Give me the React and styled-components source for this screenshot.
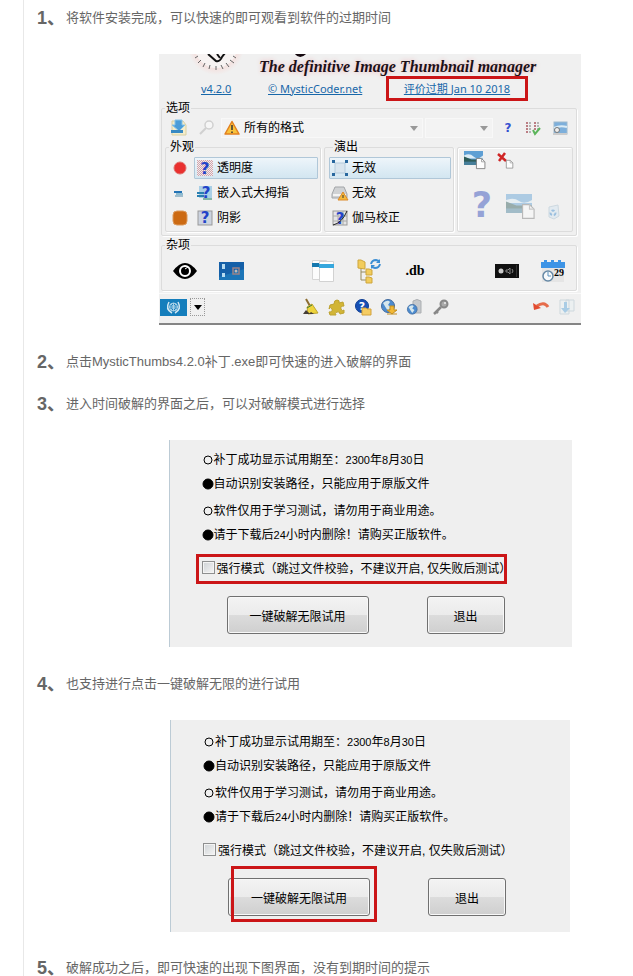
import React from "react";
import styled, { createGlobalStyle, css } from "styled-components";

const GlobalStyle = createGlobalStyle`
  * { box-sizing: border-box; }
  body {
    margin: 0;
    background: #fff;
    color: #666;
    font-family: "Liberation Sans", "Noto Sans CJK SC", sans-serif;
  }
  button, select, input { font: inherit; color: inherit; margin: 0; }
  svg { display: block; overflow: visible; }
`;

/* ---------- article ---------- */

const Article = styled.main`
  margin-left: 23px;
  padding: 10px 0 0 13px;
  border-left: 1px solid #e8e8e8;
`;

const Step = styled.p`
  display: flex;
  align-items: center;
  height: 16px;
  margin: 0 0 ${(p) => (p.$tight ? 26 : p.$last ? 0 : 28)}px;
  font-size: 13px;
  line-height: 16px;
  white-space: nowrap;
`;

const StepNumber = styled.strong`
  width: 29px;
  flex: none;
  font-size: 18px;
`;

const Figure = styled.figure`
  display: flex;
  justify-content: center;
  margin: 0 0 ${(p) => p.$gap || 29}px 70px;
`;

/* ---------- application window ---------- */

const AppWindow = styled.div`
  width: 100%;
  max-width: 422px;
  overflow: hidden;
  border-bottom: 2px solid #858585;
  background: #f0f0f0;
  color: #000;
  font-size: 12px;
  line-height: 14px;
`;

const Brand = styled.div`
  display: grid;
  grid-template-columns: 100px 1fr;
  height: 22px;
`;

const Tagline = styled.em`
  display: flex;
  align-items: center;
  padding-top: 3px;
  color: #1c1018;
  font: italic bold 16px "Liberation Serif", serif;
  white-space: nowrap;
  text-shadow: 0 0 5px #eeb4b8;
`;

const Links = styled.nav`
  display: grid;
  grid-template-columns: 32px 92px 142px;
  column-gap: 35px;
  align-items: center;
  justify-content: start;
  padding-left: 42px;
  height: 25px;
`;

const TextLink = styled.a`
  color: #1767a9;
  font-family: "Noto Sans", "Noto Sans CJK SC", sans-serif;
  font-size: 11px;
  line-height: 14px;
  white-space: nowrap;
  text-decoration: underline;
`;

const MarkedLink = styled(TextLink)`
  display: flex;
  align-items: center;
  justify-content: center;
  width: 142px;
  height: 25px;
  margin-left: -9px;
  border: 3px solid #cb1517;
`;

const Group = styled.fieldset`
  min-width: 0;
  margin: 0 4px 2px 2px;
  padding: ${(p) => p.$pad || "0"};
  border: 1px solid #dcdcdc;
  border-radius: 2px;
  box-shadow: 1px 1px 0 #fff;
`;

const SubGroup = styled(Group)`
  margin: 0;
`;

const IconGroup = styled.div`
  display: flex;
  flex-direction: column;
  gap: 21px;
  margin-top: 7px;
  padding-top: 3px;
  border: 1px solid #dcdcdc;
  border-radius: 2px;
  box-shadow: inset 1px 1px 0 #fff;
`;

const IconLine = styled.div`
  display: flex;
  align-items: flex-end;
  gap: ${(p) => (p.$large ? 13 : 11)}px;
  padding-left: ${(p) => (p.$large ? 13 : 6)}px;
`;

const Legend = styled.legend`
  height: 14px;
  margin-left: ${(p) => p.$indent ?? 3}px;
  padding: 0 1px;
`;

const FormatRow = styled.div`
  display: grid;
  grid-template-columns: 28px 28px 202px 70px repeat(3, 1fr);
  align-items: center;
  padding-top: 3px;
  margin-bottom: 2px;
`;

const ComboBox = styled.label`
  display: flex;
  align-items: center;
  gap: 4px;
  height: 20px;
  margin-left: ${(p) => (p.$spaced ? 2 : 0)}px;
  padding: 0 4px 0 2px;
  background: #f3f3f3;
  border: 1px solid #f8f8f8;
`;

const Select = styled.select`
  flex: 1;
  min-width: 0;
  appearance: none;
  border: 0;
  padding: 0;
  background: none;
`;

const Columns = styled.div`
  display: grid;
  grid-template-columns: 156px 130px 1fr;
  gap: 3px;
`;

const Settings = styled.div`
  display: grid;
  grid-template-columns: ${(p) => (p.$toggles ? "28px 1fr" : "1fr")};
  row-gap: 3px;
  padding: 3px 2px 2px ${(p) => (p.$toggles ? 0 : 4)}px;
`;

const IconButton = styled.button`
  display: flex;
  align-items: center;
  justify-content: center;
  min-width: 0;
  padding: 0;
  border: 0;
  background: none;
  opacity: ${(p) => (p.$dim ? 0.45 : 1)};
`;

const Setting = styled.button`
  display: flex;
  align-items: center;
  gap: 4px;
  height: 22px;
  padding: 0 2px;
  border: 1px solid transparent;
  background: none;
  white-space: nowrap;
  ${(p) =>
    p.$active &&
    css`
      border-color: #b0c7d8;
      border-radius: 1px;
      background: linear-gradient(#eef5fa, #ddecf5 60%, #d3e6f1);
    `}
`;

const MiscRow = styled.div`
  display: grid;
  grid-template-columns: repeat(9, 1fr);
  height: 38px;
`;

const DbLabel = styled.span`
  font: bold 14px "Liberation Serif", serif;
`;

const StatusBar = styled.div`
  display: flex;
  align-items: center;
  height: 30px;
  padding: 0 1px 3px;
  border-top: 1px solid #fafafa;
`;

const Language = styled.button`
  display: flex;
  align-items: center;
  gap: 3px;
  width: 46px;
  margin-right: 92px;
  padding: 0;
  border: 0;
  background: none;
`;

const ArrowBox = styled.span`
  display: grid;
  place-items: center;
  width: 15px;
  height: 18px;
  border: 1px dotted #999;
`;

const ToolSet = styled.div`
  display: grid;
  grid-auto-flow: column;
  grid-auto-columns: 26px;
  margin-left: ${(p) => (p.$end ? "auto" : 0)};
`;

/* ---------- patch dialog ---------- */

const Dialog = styled.form`
  width: 100%;
  max-width: ${(p) => (p.$late ? 400 : 403)}px;
  padding: ${(p) => (p.$late ? "10px 0 16px" : "8px 0 13px")};
  border-left: 1px solid #bccbd5;
  background: #efefef;
  color: #000;
  font-size: 12px;
`;

const Notes = styled.ul`
  margin: 0;
  padding: 0 0 3px 32px;
  list-style: none;
  line-height: 24px;
  white-space: nowrap;
`;

const Note = styled.li`
  display: flex;
  align-items: center;
  height: 24px;
`;

const Digits = styled.span`
  font-size: 11px;
`;

const CheckFrame = styled.label`
  display: flex;
  align-items: center;
  gap: 2px;
  width: ${(p) => (p.$marked ? "311px" : "auto")};
  height: 30px;
  margin: 4px 0 12px 26px;
  padding: 0 0 4px 3px;
  border: 3px solid ${(p) => (p.$marked ? "#cb1517" : "transparent")};
  white-space: nowrap;
`;

const Checkbox = styled.input`
  flex: none;
  appearance: none;
  width: 13px;
  height: 13px;
  border: 1px solid #8e8f8f;
  background: linear-gradient(135deg, #cfd3d6, #f5f5f5);
  box-shadow: inset 0 0 0 1px #f4f4f4;
`;

const Actions = styled.div`
  display: flex;
  gap: 58px;
  padding-left: 57px;
`;

const PushButton = styled.button`
  width: ${(p) => (p.$wide ? 142 : 78)}px;
  height: 38px;
  padding: 0;
  border: 1px solid #707070;
  border-radius: 3px;
  background: linear-gradient(#f3f3f3, #ebebeb 50%, #dcdcdc 50%, #cfcfcf);
  box-shadow: inset 0 0 0 1px #f8f8f8;
`;

const ButtonHolder = styled.div`
  position: relative;
`;

const Marker = styled.span`
  position: absolute;
  inset: -12px -7px -6px 3px;
  border: 3px solid #cb1517;
  pointer-events: none;
`;

/* ---------- drawings ---------- */

const Svg = ({ w = 16, h = 16, children }) => (
  <svg width={w} height={h} viewBox={`0 0 ${w} ${h}`} fill="none" aria-hidden="true">
    {children}
  </svg>
);

const Mark = ({ x, y, size, color = "#2343c8" }) => (
  <text x={x} y={y} fontSize={size} fontWeight="bold" fontFamily="DejaVu Sans, sans-serif" fill={color} textAnchor="middle">?</text>
);

const Bullet = ({ filled }) => (
  <Svg w={12} h={12}>
    <circle cx="6" cy="6" r={filled ? 5 : 4} fill={filled ? "#000" : "none"} stroke="#000" />
  </Svg>
);

const Page = ({ x, y, s = 1 }) => (
  <g transform={`translate(${x} ${y}) scale(${s})`}>
    <path d="M.5.5h6l4 4v8H.5z" fill="#fdfdfd" stroke="#777" />
    <path d="M6.500 .5v4h4" stroke="#999" />
  </g>
);

const Landscape = ({ w, h }) => (
  <g>
    <rect width={w} height={h} fill="#5e9fd4" />
    <path d={`M0 ${h * 0.32}q${w * 0.3}-3 ${w * 0.5} 1t${w * 0.5}-1v3H0z`} fill="#dcecf6" />
    <path d={`M0 ${h * 0.4}l${w * 0.4} ${h * 0.2}H${w}v${h * 0.2}H0z`} fill="#2e5c58" />
    <rect y={h * 0.76} width={w} height={h * 0.24} fill="#467e99" />
  </g>
);

const Caret = ({ color = "#999" }) => (
  <Svg w={8} h={5}><path d="M0 0h8L4 5z" fill={color} /></Svg>
);

const Emblem = () => (
  <Svg w={100} h={22}>
    <defs>
      <radialGradient id="halo">
        <stop offset=".55" stopColor="#f7d4d0" />
        <stop offset="1" stopColor="#f0f0f0" />
      </radialGradient>
    </defs>
    <circle cx="57" cy="-7" r="28" fill="url(#halo)" />
    <circle cx="57" cy="-7" r="21" fill="#f7f3f2" />
    <path d="M49 0l8 7q4 1 6-4l3-4M58 0l3 4" stroke="#111" strokeWidth="2" />
    <path d="M39 2l-3 2M42 6l-3 3M46 9l-2 4M51 11l-1 4M57 12v4M62 11l2 4M67 9l3 4M71 6l4 3M74 2l3 2" stroke="#666" />
    <path d="M137-1q4 5 9 0" stroke="#15090f" strokeWidth="3" />
  </Svg>
);

const ImportIcon = () => (
  <Svg>
    <path d="M1 1h11l3 4v10H1z" fill="#f4edcb" stroke="#d8cfa2" />
    <path d="M4 0h7v5h3L8 11 1 5h3z" fill="#4b9dd8" stroke="#86c3e8" />
    <path d="M0 10h12v3H0z" fill="#3789c3" />
  </Svg>
);
const Magnifier = () => (
  <Svg><circle cx="10" cy="5" r="4" stroke="#aaa" strokeWidth="1.500" fill="#fff" /><path d="M7 8l-6 6" stroke="#aaa" strokeWidth="2" /></Svg>
);
const Warning = () => (
  <Svg>
    <path d="M8 1.500L15 14H1z" fill="#f8c33c" stroke="#e28020" strokeWidth="1.500" strokeLinejoin="round" />
    <path d="M8 5v5M8 11.500v1.500" stroke="#333" strokeWidth="1.500" />
  </Svg>
);
const HelpIcon = () => <Svg><Mark x={10} y={12} size={12} color="#3551d0" /></Svg>;
const ChecksIcon = () => (
  <Svg>
    <path d="M2 2v12M10 2v8" stroke="#bb7d83" strokeWidth="2" strokeDasharray="2 1" />
    <path d="M5 2v12M13 2v8" stroke="#b4b4b4" strokeWidth="2" strokeDasharray="2 1" />
    <path d="M8 10l2 4 5-6" stroke="#5cb55b" strokeWidth="2" />
  </Svg>
);
const PreviewIcon = () => (
  <Svg>
    <rect x="2" y="2" width="13" height="12" fill="#7dafdb" stroke="#9eb9ce" />
    <path d="M2 8q6-3 13-1" stroke="#dcecf5" strokeWidth="2" />
    <circle cx="5" cy="10" r="2.500" fill="#eee" stroke="#777" />
    <path d="M1 14h14" stroke="#ccc" strokeWidth="2" />
  </Svg>
);
const RedDot = () => <Svg><circle cx="8" cy="8" r="6" fill="#e9302f" stroke="#df706c" /></Svg>;
const LinesIcon = () => (
  <Svg><path d="M2 7h8" stroke="#2473b5" strokeWidth="2" /><path d="M4 9h7" stroke="#8dbbd1" strokeWidth="2" /><path d="M3 11h8" stroke="#4f89a8" strokeWidth="1" /></Svg>
);
const OrangeIcon = () => <Svg><rect x="1" y="1" width="14" height="14" rx="4" fill="#cc6a13" stroke="#dc9a5c" /></Svg>;
const ChequeredHelp = () => (
  <Svg>
    <defs>
      <pattern id="cheque" width="2" height="2" patternUnits="userSpaceOnUse">
        <rect width="2" height="2" fill="#f3eaec" /><path d="M0 0h1v1H0zM1 1h1v1H1z" fill="#cfa5ac" />
      </pattern>
    </defs>
    <rect width="16" height="16" fill="url(#cheque)" />
    <Mark x={8} y={14} size={16} />
  </Svg>
);
const EmbeddedHelp = () => (
  <Svg>
    <rect x="2" y="1" width="13" height="12" fill="#a9cfe6" />
    <path d="M0 8h7M0 11h7" stroke="#297fb1" strokeWidth="2" />
    <path d="M6 14h9" stroke="#83b6a7" strokeWidth="2" />
    <Mark x={9} y={13} size={15} />
  </Svg>
);
const ShadowHelp = () => (
  <Svg><rect x="1" y="1" width="14" height="14" fill="#ccd3df" stroke="#999" /><Mark x={8} y={13} size={15} /></Svg>
);
const ScaleIcon = () => (
  <Svg>
    <rect x="3" y="3" width="10" height="10" fill="#d9e5ee" stroke="#b5cbdc" />
    <path d="M0 0h3v3H0zM13 0h3v3h-3zM0 13h3v3H0zM13 13h3v3h-3z" fill="#28679e" />
  </Svg>
);
const DiskIcon = () => (
  <Svg>
    <path d="M3 2h9l3 7v4H0V9z" fill="#d0d2d4" stroke="#a2a5a8" />
    <path d="M1 10h13" stroke="#f4f4f4" strokeWidth="2" />
    <path d="M11 7l5 8H6z" fill="#f5ba3b" stroke="#dc892a" /><path d="M11 10v3" stroke="#333" />
  </Svg>
);
const GammaHelp = () => (
  <Svg>
    <rect x="1" y="1" width="14" height="14" fill="#e5e5e5" stroke="#999" />
    <path d="M6 1v14M11 1v14M1 6h14M1 11h14" stroke="#aaa" />
    <Mark x={8} y={14} size={15} />
    <path d="M1 15Q10 13 15 1" stroke="#222" />
  </Svg>
);
const PicturePage = () => <Svg w={22} h={18}><Landscape w={19} h={14} /><Page x={12} y={7} s={0.85} /></Svg>;
const RemovePage = () => (
  <Svg w={16} h={16}><path d="M1 1l8 7M8 0L2 8" stroke="#cf2424" strokeWidth="2.500" /><Page x={9} y={7} s={0.65} /></Svg>
);
const BigHelp = () => <Svg w={22} h={30}><Mark x={11} y={27} size={35} color="#2846b8" /></Svg>;
const BigPicture = () => <Svg w={28} h={26}><Landscape w={26} h={19} /><Page x={16} y={10} s={1.15} /></Svg>;
const BinIcon = () => (
  <Svg w={13} h={16}>
    <path d="M2 3l9-2 1 11-5 3-5-2z" fill="#d3e4f0" stroke="#a4bdce" />
    <circle cx="6" cy="9" r="2.500" stroke="#3586cb" strokeWidth="2" strokeDasharray="3 2" />
  </Svg>
);
const EyeIcon = () => (
  <Svg w={24} h={16}>
    <path d="M0 8Q12-8 24 8Q12 24 0 8z" fill="#000" /><circle cx="12" cy="8" r="5" stroke="#fff" strokeWidth="2" /><circle cx="12" cy="8" r="2" fill="#000" /><path d="M12 6l3-2" stroke="#fff" />
  </Svg>
);
const DesktopIcon = () => (
  <Svg w={25} h={18}>
    <rect width="25" height="18" fill="#1560a8" />
    <path d="M0 15l25-8v11H0z" fill="#1c75b7" />
    <path d="M3 2h3v5H3zM3 11h3v4H3z" fill="#b7dcf0" />
    <rect x="14" y="6" width="6" height="6" stroke="#9a8287" strokeWidth="1.500" /><circle cx="17" cy="9" r="1.500" fill="#bbb" />
  </Svg>
);
const WindowsIcon = () => (
  <Svg w={22} h={22}>
    <path d="M.5.500h14v19H.5z" fill="#fcfcfc" stroke="#d6d6d6" /><path d="M0 5h15" stroke="#1678ae" strokeWidth="4" />
    <path d="M7.500 1.500h14v20h-14z" fill="#fff" stroke="#d2d2d2" /><path d="M7 6h15" stroke="#36a7dd" strokeWidth="4" />
  </Svg>
);
const FolderTree = () => (
  <Svg w={24} h={24}>
    <path d="M4 9v12h6M4 13h6" stroke="#968a5f" />
    <path d="M1 1h3l4 2v7l-7-1z" fill="#f2cc5b" stroke="#cda53c" />
    <path d="M9 10h3l3 1v5H9zM9 18h3l3 1v5H9z" fill="#f2cc5b" stroke="#cda53c" />
    <path d="M14 5q1-4 5-4l3 1M23 5q-1 4-5 4l-3-1" stroke="#3c8ed3" strokeWidth="2" /><path d="M23 0v4h-4zM14 10V6h4z" fill="#3c8ed3" />
  </Svg>
);
const AudioIcon = () => (
  <Svg w={24} h={14}>
    <path d="M0 0h24v14H0z" fill="#111" /><circle cx="6" cy="7" r="2.500" fill="#ccc" /><path d="M11 6h2l2-2v6l-2-2h-2z" stroke="#888" /><path d="M17 5q2 2 0 4" stroke="#888" /><path d="M21.500 1v12" stroke="#333" />
  </Svg>
);
const CalendarIcon = () => (
  <Svg w={24} h={24}>
    <rect x="1" y="8" width="22" height="15" fill="#e5e5e5" />
    <path d="M0 3h3V1h3v2h4V1h3v2h4V1h3v2h4v6H0z" fill="#3d94e6" />
    <circle cx="7" cy="17" r="5" fill="#f8fafb" stroke="#6588a5" strokeWidth="1.500" /><path d="M7 13v4h3" stroke="#5b91bd" />
    <text x="18" y="17" fontSize="10" fontWeight="bold" fontFamily="Liberation Serif, serif" fill="#000" textAnchor="middle">29</text>
  </Svg>
);
const FlagIcon = () => (
  <Svg w={27} h={17}>
    <rect width="27" height="17" fill="#157ebc" />
    <circle cx="13.500" cy="8" r="4" stroke="#b8d9eb" /><path d="M9.500 8h8M13.500 4v8M11 5l5 6M16 5l-5 6" stroke="#a6d0e7" />
    <path d="M9 3q-4 7 3 11M18 3q4 7-3 11" stroke="#d4e8f2" strokeWidth="1.500" />
  </Svg>
);
const BroomIcon = () => (
  <Svg>
    <path d="M3 0l4 7" stroke="#8c6d31" strokeWidth="2" />
    <path d="M4 8l5-3 6 9-10 1z" fill="#eed43c" stroke="#bda52e" />
    <path d="M4 9l5-3" stroke="#3d7a3a" />
    <path d="M0 15l3-4 4 4zM8 13l3 2H6z" fill="#463d35" />
  </Svg>
);
const PuzzleIcon = () => (
  <Svg><path d="M1 6l4-1q0-4 3-4t2 3l4-1 1 4q-4 0-3 3t3 1v3l-4 1q0-3-3-2t-1 3H1l-1-3q4 0 3-3t-3 0z" fill="#d2b536" stroke="#bda231" /></Svg>
);
const Globe = () => (
  <g><circle cx="7" cy="7" r="6.500" fill="#4c8bcf" stroke="#426b9e" /><path d="M2 4q5-4 7-1l-2 3 3 2-3 4-2-3z" fill="#d6e7ed" /></g>
);
const HelpFolder = () => (
  <Svg><circle cx="7" cy="7" r="6.500" fill="#164fb4" stroke="#0f3e93" /><Mark x={7} y={11} size={11} color="#fff" /><path d="M7 9h4l1 1h4v6H7z" fill="#f5cc62" stroke="#d2a23c" /></Svg>
);
const GlobeDownload = () => (
  <Svg><Globe /><path d="M9 7h4v4h3l-5 4-5-4h3zM6 15h10" fill="#f2b834" stroke="#c38e21" /></Svg>
);
const GlobeDatabase = () => (
  <Svg><path d="M6 2q4-3 8 0v12H6z" fill="#c6c9cc" stroke="#acafb2" /><g transform="translate(0 5) scale(.75)"><Globe /></g></Svg>
);
const KeyIcon = () => (
  <Svg><circle cx="11" cy="5" r="3.500" fill="#aaa" stroke="#888" strokeWidth="2" /><circle cx="12" cy="4" r="1" fill="#eee" /><path d="M8 8l-7 7M3 12l2 2" stroke="#888" strokeWidth="2.500" /></Svg>
);
const UndoIcon = () => (
  <Svg><path d="M4 7q7-5 11 1" stroke="#e66c4b" strokeWidth="3" /><path d="M0 4l1 7 7-2z" fill="#e24b30" /></Svg>
);
const ExportIcon = () => (
  <Svg><path d="M1 1h9v14H1zM7 1h8v11H7z" fill="#e8f0f4" stroke="#a6bcc9" /><path d="M5 3h3v6h3l-5 5-4-5h3z" fill="#54a2d8" /></Svg>
);

/* ---------- parts ---------- */

const Tool = ({ icon: Icon, label, dim }) => (
  <IconButton type="button" aria-label={label} $dim={dim}><Icon /></IconButton>
);

const appearance = [
  { toggle: RedDot, name: "红色", icon: ChequeredHelp, label: "透明度", active: true },
  { toggle: LinesIcon, name: "线条", icon: EmbeddedHelp, label: "嵌入式大拇指" },
  { toggle: OrangeIcon, name: "边框", icon: ShadowHelp, label: "阴影" },
];

const rendering = [
  { icon: ScaleIcon, label: "无效", active: true },
  { icon: DiskIcon, label: "无效" },
  { icon: GammaHelp, label: "伽马校正" },
];

const SettingsList = ({ items, toggles }) => (
  <Settings $toggles={toggles}>
    {items.map(({ toggle, name, icon: Icon, label, active }, i) => (
      <React.Fragment key={i}>
        {toggle && <Tool icon={toggle} label={name} />}
        <Setting type="button" $active={active}><Icon />{label}</Setting>
      </React.Fragment>
    ))}
  </Settings>
);

const ThumbsWindow = () => (
  <AppWindow>
    <Brand>
      <Emblem />
      <Tagline>The definitive Image Thumbnail manager</Tagline>
    </Brand>
    <Links>
      <TextLink href="#version">v4.2.0</TextLink>
      <TextLink href="#site">© MysticCoder.net</TextLink>
      <MarkedLink href="#expiry">评价过期 Jan 10 2018</MarkedLink>
    </Links>
    <Group $pad="0 3px 3px">
      <Legend $indent={0}>选项</Legend>
      <FormatRow>
        <Tool icon={ImportIcon} label="导入" />
        <Tool icon={Magnifier} label="搜索" dim />
        <ComboBox>
          <Warning />
          <Select aria-label="格式"><option>所有的格式</option></Select>
          <Caret />
        </ComboBox>
        <ComboBox $spaced>
          <Select aria-label="类型"><option></option></Select>
          <Caret />
        </ComboBox>
        <Tool icon={HelpIcon} label="帮助" />
        <Tool icon={ChecksIcon} label="全选" />
        <Tool icon={PreviewIcon} label="预览" />
      </FormatRow>
      <Columns>
        <SubGroup>
          <Legend>外观</Legend>
          <SettingsList items={appearance} toggles />
        </SubGroup>
        <SubGroup>
          <Legend $indent={8}>演出</Legend>
          <SettingsList items={rendering} />
        </SubGroup>
        <IconGroup>
          <IconLine>
            <Tool icon={PicturePage} label="图片页面" />
            <Tool icon={RemovePage} label="移除" />
          </IconLine>
          <IconLine $large>
            <Tool icon={BigHelp} label="未知" dim />
            <Tool icon={BigPicture} label="大图" dim />
            <Tool icon={BinIcon} label="回收" dim />
          </IconLine>
        </IconGroup>
      </Columns>
    </Group>
    <Group>
      <Legend>杂项</Legend>
      <MiscRow>
        <Tool icon={EyeIcon} label="显示" />
        <Tool icon={DesktopIcon} label="桌面" />
        <span />
        <Tool icon={WindowsIcon} label="窗口" />
        <Tool icon={FolderTree} label="文件夹" />
        <IconButton type="button"><DbLabel>.db</DbLabel></IconButton>
        <span />
        <Tool icon={AudioIcon} label="音频" />
        <Tool icon={CalendarIcon} label="日期" />
      </MiscRow>
    </Group>
    <StatusBar>
      <Language type="button" aria-label="语言">
        <FlagIcon />
        <ArrowBox><Caret color="#000" /></ArrowBox>
      </Language>
      <ToolSet>
        <Tool icon={BroomIcon} label="清理" />
        <Tool icon={PuzzleIcon} label="插件" />
        <Tool icon={HelpFolder} label="帮助文件" />
        <Tool icon={GlobeDownload} label="下载" />
        <Tool icon={GlobeDatabase} label="数据库" />
        <Tool icon={KeyIcon} label="密钥" />
      </ToolSet>
      <ToolSet $end>
        <Tool icon={UndoIcon} label="撤销" />
        <Tool icon={ExportIcon} label="应用" dim />
      </ToolSet>
    </StatusBar>
  </AppWindow>
);

const PatchDialog = ({ late, markCheck, markButton }) => (
  <Dialog $late={late}>
    <Notes>
      <Note><Bullet />补丁成功显示试用期至：<Digits>2300</Digits>年<Digits>8</Digits>月<Digits>30</Digits>日</Note>
      <Note><Bullet filled />自动识别安装路径，只能应用于原版文件</Note>
    </Notes>
    <Notes>
      <Note><Bullet />软件仅用于学习测试，请勿用于商业用途。</Note>
      <Note><Bullet filled />请于下载后<Digits>24</Digits>小时内删除！请购买正版软件。</Note>
    </Notes>
    <CheckFrame $marked={markCheck}>
      <Checkbox type="checkbox" />
      强行模式（跳过文件校验，不建议开启, 仅失败后测试）
    </CheckFrame>
    <Actions>
      <ButtonHolder>
        <PushButton type="button" $wide>一键破解无限试用</PushButton>
        {markButton && <Marker />}
      </ButtonHolder>
      <PushButton type="button">退出</PushButton>
    </Actions>
  </Dialog>
);

export default function App() {
  return (
    <>
      <GlobalStyle />
      <Article>
        <Step><StepNumber>1、</StepNumber>将软件安装完成，可以快速的即可观看到软件的过期时间</Step>
        <Figure><ThumbsWindow /></Figure>
        <Step $tight><StepNumber>2、</StepNumber>点击MysticThumbs4.2.0补丁.exe即可快速的进入破解的界面</Step>
        <Step><StepNumber>3、</StepNumber>进入时间破解的界面之后，可以对破解模式进行选择</Step>
        <Figure><PatchDialog markCheck /></Figure>
        <Step><StepNumber>4、</StepNumber>也支持进行点击一键破解无限的进行试用</Step>
        <Figure $gap={28}><PatchDialog late markButton /></Figure>
        <Step $last><StepNumber>5、</StepNumber>破解成功之后，即可快速的出现下图界面，没有到期时间的提示</Step>
      </Article>
    </>
  );
}
